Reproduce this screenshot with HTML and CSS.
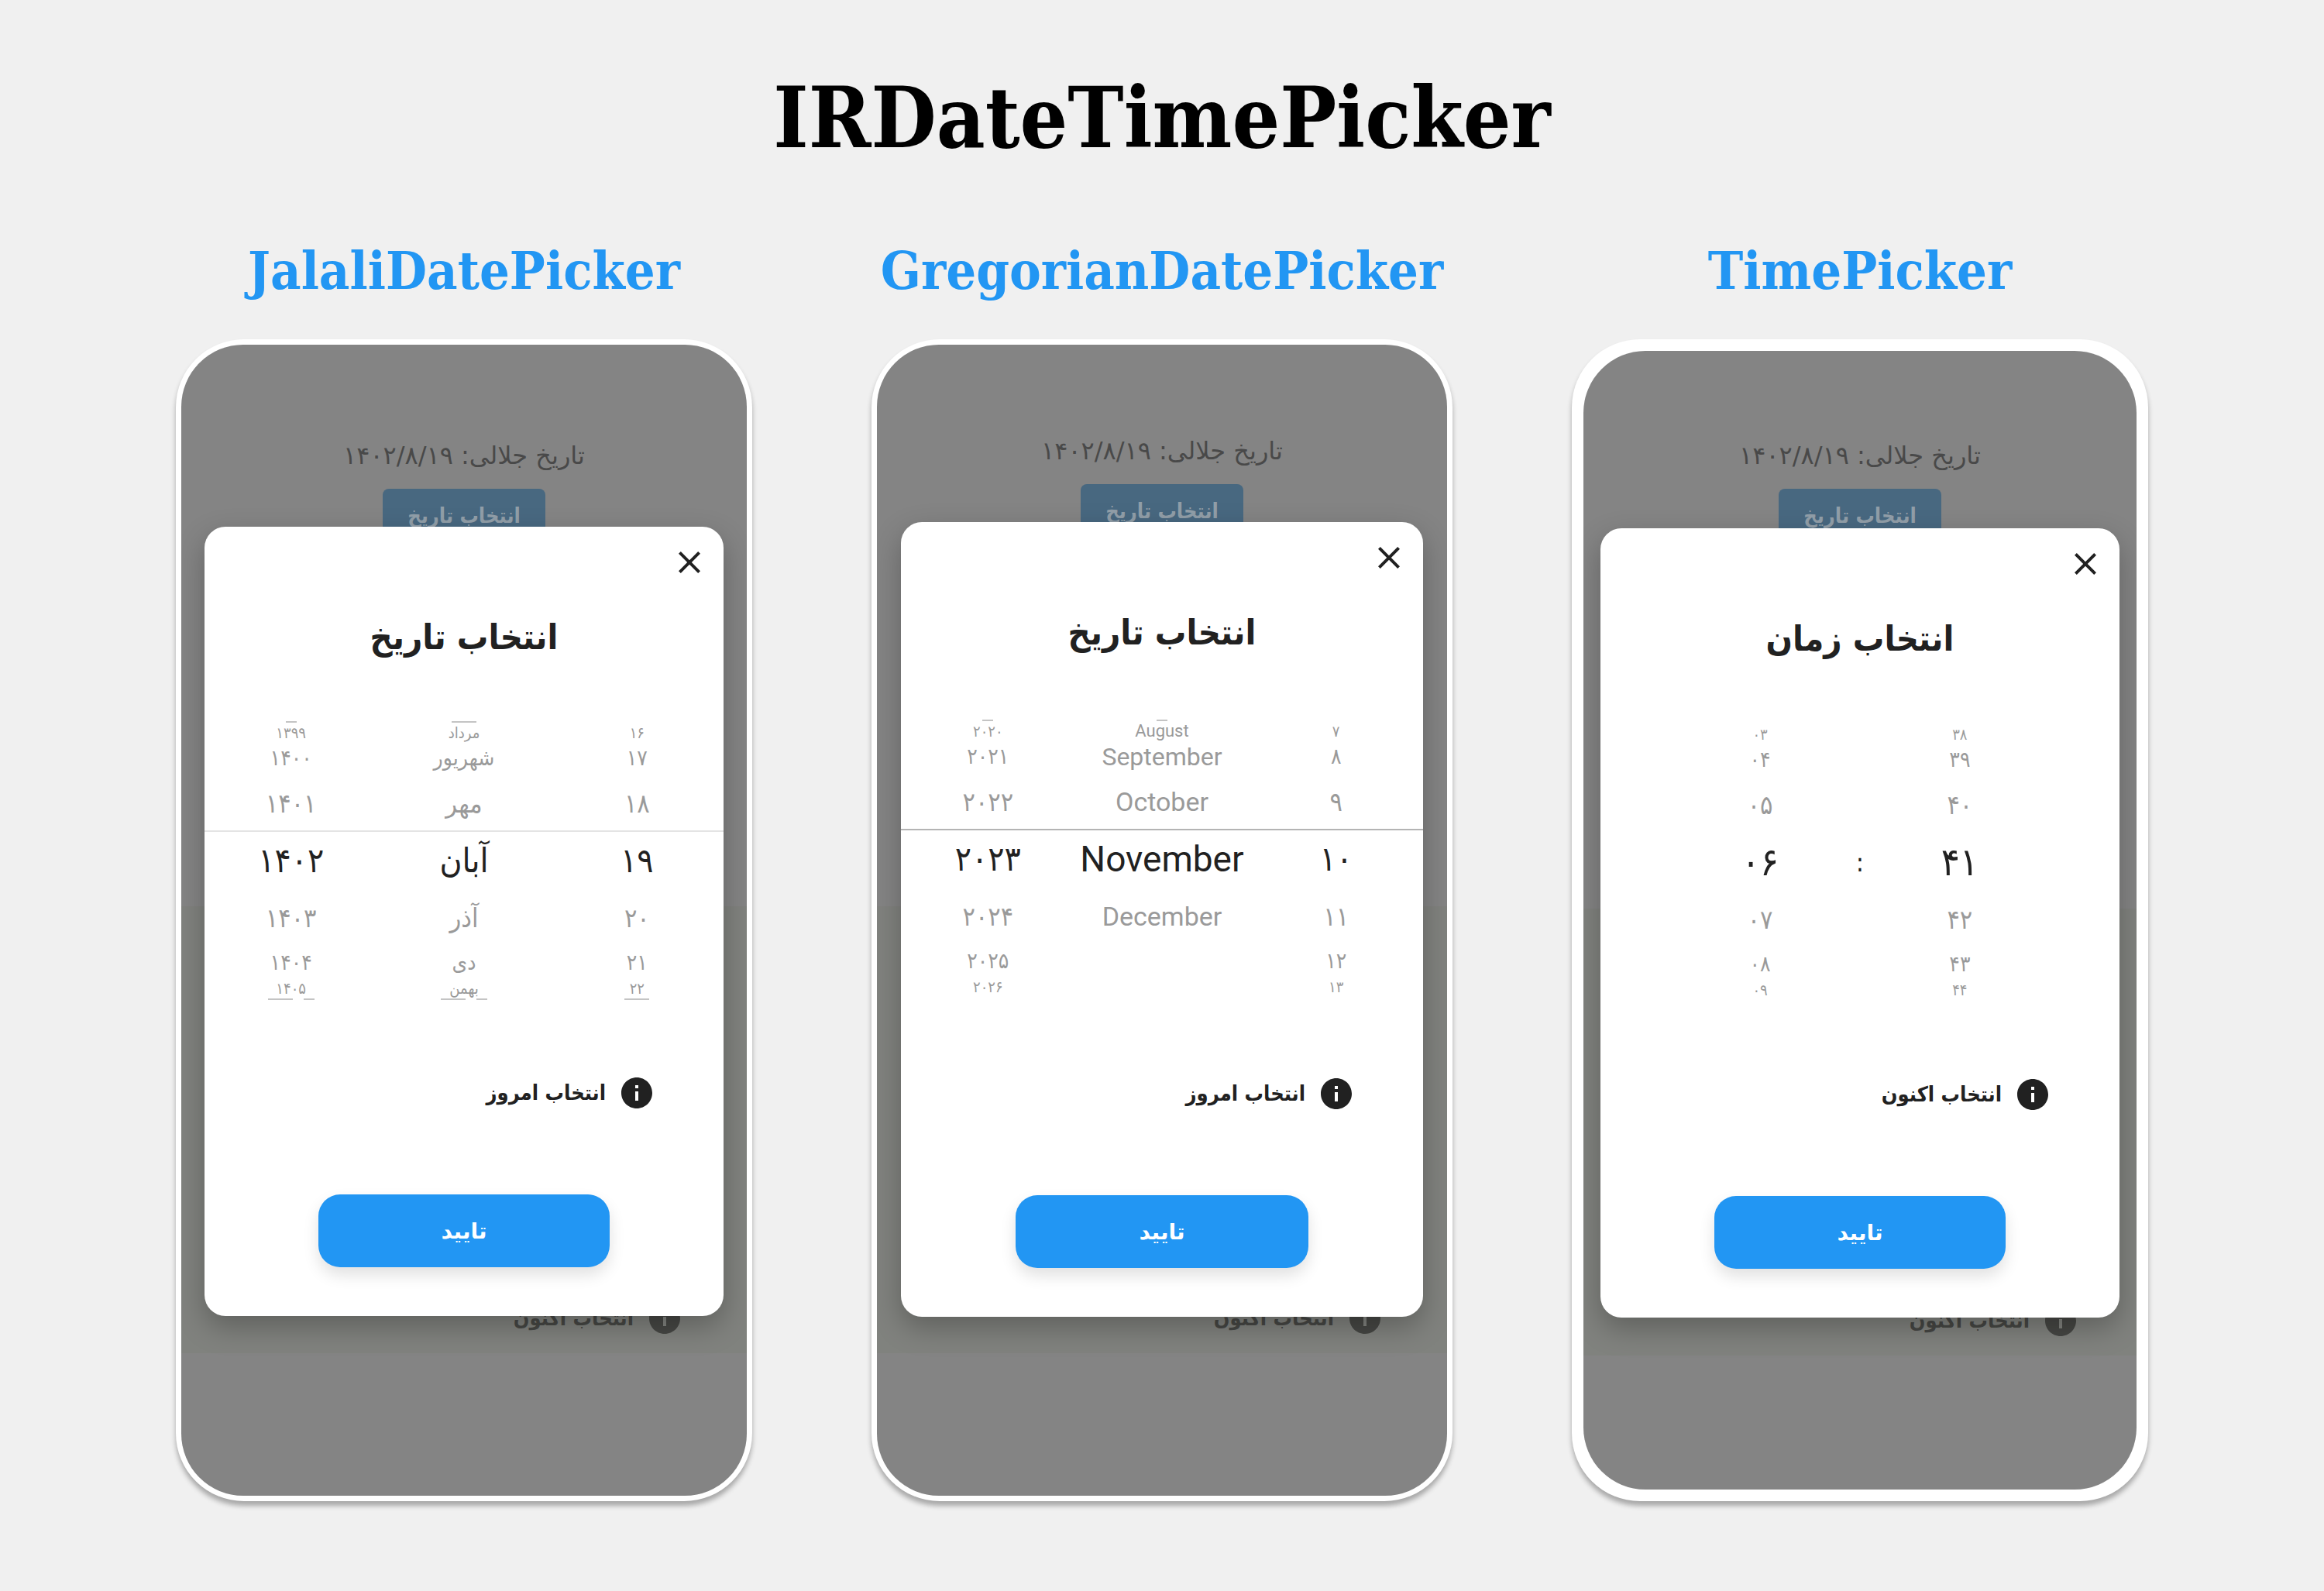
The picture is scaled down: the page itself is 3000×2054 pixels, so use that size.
FILE: index.html
```
<!DOCTYPE html>
<html lang="en">
<head>
<meta charset="utf-8">
<meta name="viewport" content="width=device-width, initial-scale=1">
<title>IRDateTimePicker</title>
<link rel="stylesheet" href="styles.css">
</head>
<body>
<svg class="sprite" width="0" height="0" aria-hidden="true">
  <symbol id="close" viewBox="0 0 24 24"><path d="M19 6.41L17.59 5 12 10.59 6.41 5 5 6.41 10.59 12 5 17.59 6.41 19 12 13.41 17.59 19 19 17.59 13.41 12z"/></symbol>
  <symbol id="info" viewBox="2 2 20 20"><path d="M12 2C6.48 2 2 6.48 2 12s4.48 10 10 10 10-4.48 10-10S17.52 2 12 2zm1 15h-2v-6h2v6zm0-8h-2V7h2v2z"/></symbol>
</svg>

<h1 class="title">IRDateTimePicker</h1>

<main class="showcase">
  <section class="demo demo-jalali">
    <h2 class="subtitle">JalaliDatePicker</h2>
    <div class="phone">
      <div class="screen">
        <div class="page" lang="fa" dir="rtl">
          <div class="page-top">
            <p class="page-date">تاریخ جلالی: ۱۴۰۲/۸/۱۹</p>
            <button class="page-button" type="button">انتخاب تاریخ</button>
          </div>
          <div class="page-band">
            <button class="now now-page" type="button"><svg class="now-icon"><use href="#info"/></svg>انتخاب اکنون</button>
          </div>
        </div>
        <div class="dialog" role="dialog" aria-label="انتخاب تاریخ" lang="fa" dir="rtl">
          <button class="close" type="button" aria-label="بستن"><svg class="close-icon"><use href="#close"/></svg></button>
          <h3 class="dialog-title">انتخاب تاریخ</h3>
          <div class="wheels wheels-lined" dir="ltr">
            <ol class="wheel">
              <li class="trace"><span class="trace-bar"></span></li>
              <li class="edge">۱۳۹۹</li>
              <li class="far">۱۴۰۰</li>
              <li class="near">۱۴۰۱</li>
              <li class="selected">۱۴۰۲</li>
              <li class="near">۱۴۰۳</li>
              <li class="far">۱۴۰۴</li>
              <li class="edge">۱۴۰۵</li>
              <li class="trace"><span class="trace-bar trace-wide"></span><span class="trace-bar"></span></li>
            </ol>
            <ol class="wheel">
              <li class="trace"><span class="trace-bar trace-wide"></span></li>
              <li class="edge">مرداد</li>
              <li class="far">شهریور</li>
              <li class="near">مهر</li>
              <li class="selected">آبان</li>
              <li class="near">آذر</li>
              <li class="far">دی</li>
              <li class="edge">بهمن</li>
              <li class="trace"><span class="trace-bar trace-wide"></span><span class="trace-bar"></span></li>
            </ol>
            <ol class="wheel">
              <li class="trace"></li>
              <li class="edge">۱۶</li>
              <li class="far">۱۷</li>
              <li class="near">۱۸</li>
              <li class="selected">۱۹</li>
              <li class="near">۲۰</li>
              <li class="far">۲۱</li>
              <li class="edge">۲۲</li>
              <li class="trace"><span class="trace-bar trace-wide"></span></li>
            </ol>
          </div>
          <button class="now" type="button"><svg class="now-icon"><use href="#info"/></svg>انتخاب امروز</button>
          <button class="confirm" type="button">تایید</button>
        </div>
      </div>
    </div>
  </section>

  <section class="demo demo-gregorian">
    <h2 class="subtitle">GregorianDatePicker</h2>
    <div class="phone">
      <div class="screen">
        <div class="page" lang="fa" dir="rtl">
          <div class="page-top">
            <p class="page-date">تاریخ جلالی: ۱۴۰۲/۸/۱۹</p>
            <button class="page-button" type="button">انتخاب تاریخ</button>
          </div>
          <div class="page-band">
            <button class="now now-page" type="button"><svg class="now-icon"><use href="#info"/></svg>انتخاب اکنون</button>
          </div>
        </div>
        <div class="dialog" role="dialog" aria-label="انتخاب تاریخ" lang="fa" dir="rtl">
          <button class="close" type="button" aria-label="بستن"><svg class="close-icon"><use href="#close"/></svg></button>
          <h3 class="dialog-title">انتخاب تاریخ</h3>
          <div class="wheels wheels-lined" dir="ltr">
            <ol class="wheel">
              <li class="trace"><span class="trace-bar"></span></li>
              <li class="edge">۲۰۲۰</li>
              <li class="far">۲۰۲۱</li>
              <li class="near">۲۰۲۲</li>
              <li class="selected">۲۰۲۳</li>
              <li class="near">۲۰۲۴</li>
              <li class="far">۲۰۲۵</li>
              <li class="edge">۲۰۲۶</li>
              <li class="trace"></li>
            </ol>
            <ol class="wheel wheel-latin" lang="en">
              <li class="trace"><span class="trace-bar"></span></li>
              <li class="edge">August</li>
              <li class="far">September</li>
              <li class="near">October</li>
              <li class="selected">November</li>
              <li class="near">December</li>
            </ol>
            <ol class="wheel">
              <li class="trace"></li>
              <li class="edge">۷</li>
              <li class="far">۸</li>
              <li class="near">۹</li>
              <li class="selected">۱۰</li>
              <li class="near">۱۱</li>
              <li class="far">۱۲</li>
              <li class="edge">۱۳</li>
              <li class="trace"></li>
            </ol>
          </div>
          <button class="now" type="button"><svg class="now-icon"><use href="#info"/></svg>انتخاب امروز</button>
          <button class="confirm" type="button">تایید</button>
        </div>
      </div>
    </div>
  </section>

  <section class="demo demo-time">
    <h2 class="subtitle">TimePicker</h2>
    <div class="phone">
      <div class="screen">
        <div class="page" lang="fa" dir="rtl">
          <div class="page-top">
            <p class="page-date">تاریخ جلالی: ۱۴۰۲/۸/۱۹</p>
            <button class="page-button" type="button">انتخاب تاریخ</button>
          </div>
          <div class="page-band">
            <button class="now now-page" type="button"><svg class="now-icon"><use href="#info"/></svg>انتخاب اکنون</button>
          </div>
        </div>
        <div class="dialog" role="dialog" aria-label="انتخاب زمان" lang="fa" dir="rtl">
          <button class="close" type="button" aria-label="بستن"><svg class="close-icon"><use href="#close"/></svg></button>
          <h3 class="dialog-title">انتخاب زمان</h3>
          <div class="wheels wheels-time" dir="ltr">
            <ol class="wheel">
              <li class="trace"></li>
              <li class="edge">۰۳</li>
              <li class="far">۰۴</li>
              <li class="near">۰۵</li>
              <li class="selected">۰۶</li>
              <li class="near">۰۷</li>
              <li class="far">۰۸</li>
              <li class="edge">۰۹</li>
              <li class="trace"></li>
            </ol>
            <span class="colon">:</span>
            <ol class="wheel">
              <li class="trace"></li>
              <li class="edge">۳۸</li>
              <li class="far">۳۹</li>
              <li class="near">۴۰</li>
              <li class="selected">۴۱</li>
              <li class="near">۴۲</li>
              <li class="far">۴۳</li>
              <li class="edge">۴۴</li>
              <li class="trace"></li>
            </ol>
          </div>
          <button class="now" type="button"><svg class="now-icon"><use href="#info"/></svg>انتخاب اکنون</button>
          <button class="confirm" type="button">تایید</button>
        </div>
      </div>
    </div>
  </section>
</main>
</body>
</html>
```
FILE: styles.css
```
* {
  box-sizing: border-box;
}

body {
  margin: 0;
  padding: 88px 227px 117px;
  background: #f0f0f0;
  color: #212121;
  font-family: "DejaVu Sans", sans-serif;
}

h1, h2, h3, p, ol {
  margin: 0;
  padding: 0;
}

ol {
  list-style: none;
}

button {
  border: 0;
  padding: 0;
  background: none;
  color: inherit;
  font: inherit;
  cursor: pointer;
}

svg {
  display: block;
  fill: currentColor;
}

.sprite {
  position: absolute;
}

/* Headings */

.title,
.subtitle {
  font-family: "DejaVu Serif Condensed", "DejaVu Serif", serif;
  font-weight: 700;
  text-align: center;
  white-space: nowrap;
}

.title {
  margin-bottom: 93px;
  color: #000;
  font-size: 108px;
  line-height: 128px;
}

.subtitle {
  margin-bottom: 49px;
  color: #2296f3;
  font-size: 68px;
  line-height: 80px;
}

.showcase {
  display: grid;
  grid-template-columns: 124fr 125fr 124fr;
  gap: 154px;
}

.demo {
  display: flex;
  flex-direction: column;
  min-width: 0;
}

/* Phone frame */

.demo-jalali {
  --bezel: 7px;
  --page-top: 123px;
  --dialog-top: 235px;
  --dialog-side: 30px;
  --page-side: 86px;
  --line: #e4e4e4;
}

.demo-gregorian {
  --bezel: 7px;
  --page-top: 117px;
  --dialog-top: 229px;
  --dialog-side: 31px;
  --page-side: 86px;
  --line: #b4b4b4;
}

.demo-time {
  --bezel: 15px;
  --page-top: 115px;
  --dialog-top: 229px;
  --dialog-side: 22px;
  --page-side: 78px;
}

.phone {
  display: flex;
  flex: 1;
  padding: var(--bezel);
  border-radius: 88px;
  background: #fff;
  box-shadow: 0 6px 6px rgba(0, 0, 0, .3);
}

.screen {
  display: grid;
  flex: 1;
  min-width: 0;
  overflow: hidden;
  border-radius: 80px;
  background: #848484;
}

.page,
.dialog {
  grid-area: 1 / 1;
}

/* Dimmed page behind the dialog */

.page {
  padding-bottom: 182px;
}

.demo-time .page {
  padding-bottom: 173px;
}

.page-top {
  display: flex;
  flex-direction: column;
  align-items: center;
  gap: 23px;
  min-height: 725px;
  padding-top: var(--page-top);
}

.demo-time .page-top {
  min-height: 720px;
}

.page-date {
  color: #494949;
  font-size: 32px;
  line-height: 40px;
}

.page-button {
  width: 210px;
  height: 68px;
  border-radius: 8px;
  background: #486880;
  color: #919ea8;
  font-family: "DejaVu Sans Condensed", "DejaVu Sans", sans-serif;
  font-size: 27px;
  font-weight: 700;
}

.page-band {
  display: flex;
  align-items: flex-end;
  min-height: 577px;
  padding: 0 var(--page-side) 25px;
  background: #80827e;
}

/* Dialog */

.dialog {
  display: flex;
  flex-direction: column;
  align-self: start;
  margin: var(--dialog-top) var(--dialog-side) 0;
  padding: 22px 0 63px;
  border-radius: 27px;
  background: #fff;
  box-shadow: 0 14px 36px rgba(0, 0, 0, .26);
}

.close {
  align-self: flex-start;
  margin: 0 20px 45px;
}

.close-icon {
  width: 48px;
  height: 48px;
}

.dialog-title {
  margin-bottom: 77px;
  font-family: "DejaVu Sans Condensed", "DejaVu Sans", sans-serif;
  font-size: 45px;
  font-weight: 700;
  line-height: 56px;
  text-align: center;
}

.demo-gregorian .dialog-title {
  margin-bottom: 81px;
}

.now {
  display: flex;
  align-items: center;
  align-self: flex-start;
  gap: 20px;
  margin: 0 92px 111px;
  font-family: "DejaVu Sans Condensed", "DejaVu Sans", sans-serif;
  font-size: 27px;
  font-weight: 700;
  line-height: 40px;
}

.now-icon {
  width: 40px;
  height: 40px;
}

.now-page {
  align-self: flex-end;
  margin: 0;
  color: #464744;
}

.confirm {
  align-self: center;
  width: 56%;
  height: 94px;
  border-radius: 28px;
  background: #2296f3;
  box-shadow: 0 10px 20px rgba(0, 0, 0, .12);
  color: #fff;
  font-size: 28px;
  font-weight: 700;
}

/* Wheels */

.wheels {
  position: relative;
  display: grid;
  grid-template-columns: repeat(3, 1fr);
  margin-bottom: 97px;
  font-family: "DejaVu Sans Condensed", "DejaVu Sans", sans-serif;
  text-align: center;
}

.demo-gregorian .wheels {
  margin-bottom: 100px;
}

.wheels-time {
  grid-template-columns: 4fr 1fr 4fr;
  padding: 0 103px;
}

.wheels-lined::before {
  content: "";
  position: absolute;
  top: 144px;
  right: 0;
  left: 0;
  height: 2px;
  background: var(--line);
}

.wheel {
  color: #9a9a9a;
  white-space: nowrap;
}

.wheel-latin {
  font-family: Roboto, sans-serif;
}

.trace {
  display: flex;
  align-items: center;
  justify-content: center;
  gap: 14px;
  height: 8px;
}

.trace-bar {
  width: 14px;
  height: 2px;
  background: #c4c4c4;
}

.trace-wide {
  width: 32px;
}

.edge {
  font-size: 20px;
  line-height: 20px;
}

.far {
  font-size: 28px;
  line-height: 46px;
}

.near {
  font-size: 34px;
  line-height: 70px;
}

.selected {
  color: #212121;
  font-size: 44px;
  line-height: 78px;
}

.wheel-latin .edge {
  font-size: 22px;
}

.wheel-latin .far {
  font-size: 32px;
}

.wheel-latin .selected {
  font-size: 46px;
}

.wheels-time .selected {
  font-size: 50px;
}

.colon {
  align-self: center;
  color: #212121;
  font-size: 34px;
}
```
